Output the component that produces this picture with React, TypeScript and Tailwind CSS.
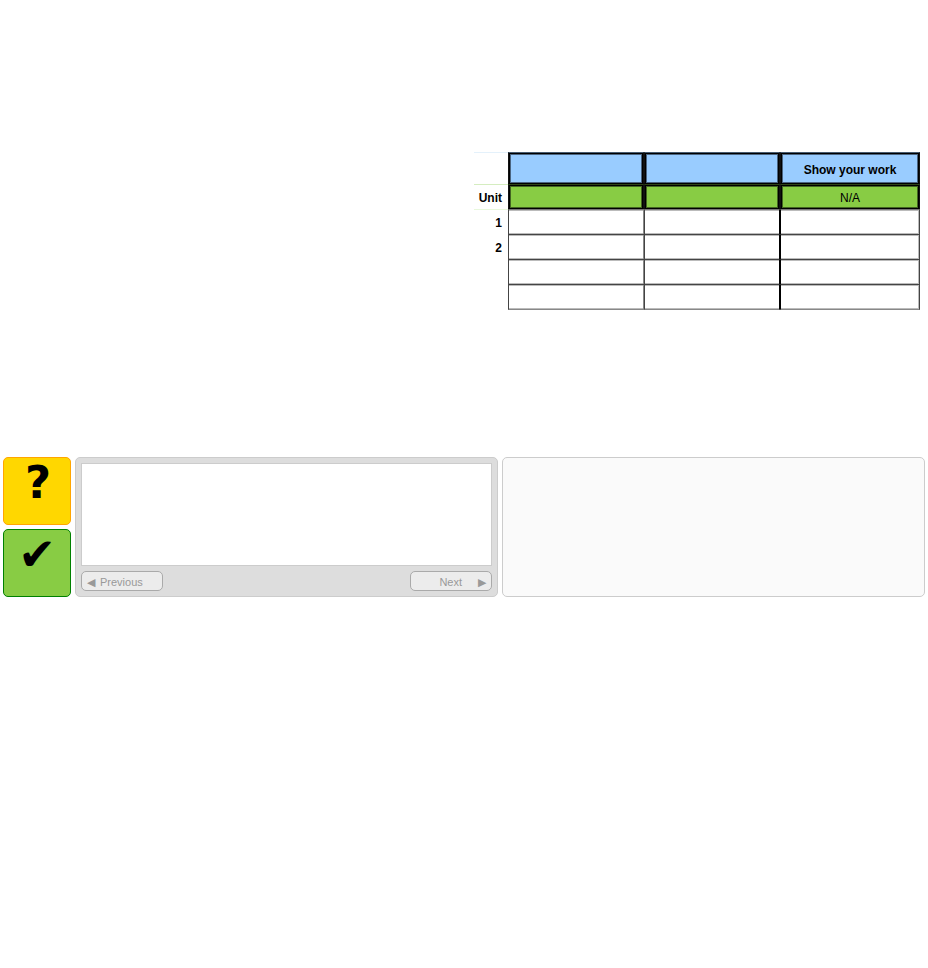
import React from "react";

const head =
  "border border-t-[#475b70] border-x-[#111] border-b-black bg-[#99ccff] p-0 pt-1 text-center font-bold shadow-[inset_1px_1px_0_#000,inset_-1px_0_0_#000,inset_2px_2px_0_#4a6480,inset_-2px_-1px_0_#4a6480]";
const unit =
  "border border-t-[#2d4417] border-x-[#111] border-b-black bg-[#88cc44] p-0 pt-[2px] text-center shadow-[inset_1px_1px_0_#000,inset_-1px_0_0_#000,inset_2px_2px_0_#436522,inset_-2px_-1px_0_#436522]";
const cell = "border-t border-l border-l-[#444] p-0";
const label = "border-t p-0 pt-px pr-[6px] text-right font-bold";
const nav =
  "flex h-5 w-[82px] items-center rounded-[5px] border border-[#aaa] bg-[#ececec] px-[5px] pt-px text-[11px] leading-[18px] text-[#999]";

const edges = [
  "shadow-[inset_-1px_0_0_#888,inset_0_1px_0_#bbb,inset_0_-1px_0_#bbb]",
  "border-r border-r-black shadow-[inset_0_1px_0_#bbb,inset_0_-1px_0_#bbb]",
  "border-r border-r-[#444] border-l-black shadow-[inset_-1px_1px_0_#bbb,inset_0_-1px_0_#bbb]",
];

function DataTable() {
  const labels = ["1", "2", "", ""];
  return (
    <table className="ml-auto w-[446px] table-fixed border-separate border-spacing-0 text-[12px] leading-4">
      <colgroup>
        <col className="w-[34px]" />
        <col className="w-[136px]" />
        <col className="w-[136px]" />
        <col className="w-[140px]" />
      </colgroup>
      <thead>
        <tr className="h-8">
          <td className="border-t border-[#e4f1fb] p-0" />
          <th className={head} />
          <th className={head} />
          <th className={head}>Show your work</th>
        </tr>
        <tr className="h-[25px]">
          <th scope="row" className={label + " border-[#d5edc0]"}>Unit</th>
          <td className={unit} />
          <td className={unit} />
          <td className={unit}>N/A</td>
        </tr>
      </thead>
      <tbody>
        {labels.map((text, i) => {
          const last = i === labels.length - 1;
          const top = i === 0 ? " border-t-[#777]" : " border-t-[#444]";
          const bottom = last ? " border-b border-b-[#888]" : "";
          return (
            <tr key={i} className={last ? "h-[26px]" : "h-[25px]"}>
              <th scope="row" className={label + (i === 0 ? " border-[#e8f8dc]" : " border-white")}>{text}</th>
              {edges.map((edge) => (
                <td key={edge} className={`${cell} ${edge}${top}${bottom}`} />
              ))}
            </tr>
          );
        })}
      </tbody>
    </table>
  );
}

export default function App() {
  return (
    <main className="bg-white font-['Liberation_Sans',Arial,sans-serif] text-black">
      <section className="flex min-h-[457px] items-start pt-[152px] pr-2">
        <DataTable />
      </section>
      <section className="grid grid-cols-[68px_minmax(0,1fr)_minmax(0,1fr)] gap-1 px-[3px]">
        <div className="flex flex-col gap-1 font-['DejaVu_Sans',sans-serif] text-[45px] leading-[50px] font-bold">
          <button aria-label="Help" className="flex h-[68px] justify-center rounded-[5px] border border-[orange] bg-[#ffd700] pl-[2px]">?</button>
          <button aria-label="Check answer" className="flex h-[68px] justify-center rounded-[5px] border border-[green] bg-[#88cc44]">✔</button>
        </div>
        <div className="flex flex-col gap-[5px] rounded-[5px] border border-[#ccc] bg-[#ddd] p-[5px]">
          <div className="flex-1 border border-[#ccc] bg-white" />
          <div className="flex justify-between">
            <button disabled className={nav}><span className="w-[13px] text-left leading-4">◀</span>Previous</button>
            <button disabled className={nav + " justify-end"}>Next<span className="w-6 text-right leading-4">▶</span></button>
          </div>
        </div>
        <div className="rounded-[5px] border border-[#ccc] bg-[#fafafa]" />
      </section>
    </main>
  );
}
